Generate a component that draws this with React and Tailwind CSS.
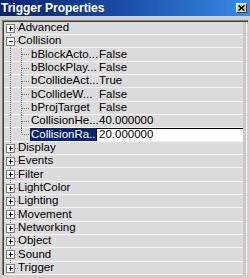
import React from "react";

const CHILDREN = [
  ["bBlockActo...", "False"],
  ["bBlockPlay...", "False"],
  ["bCollideAct...", "True"],
  ["bCollideW...", "False"],
  ["bProjTarget", "False"],
  ["CollisionHe...", "40.000000"],
];

const GROUPS_AFTER = [
  "Display",
  "Events",
  "Filter",
  "LightColor",
  "Lighting",
  "Movement",
  "Networking",
  "Object",
  "Sound",
  "Trigger",
];

const DOT = { stroke: "#808080", strokeWidth: 1, strokeDasharray: "1 1", shapeRendering: "crispEdges" };
const ROW = "h-[13.33px] flex items-stretch border-b border-[#f4f4f4] bg-[#dcdcdc]";

const GroupTree = ({ open, first, last }) => (
  <svg width="14" height="13.33" viewBox="0 0 14 13.33" className="shrink-0">
    {!first && <line x1="6.5" y1="0" x2="6.5" y2="2.5" style={DOT} />}
    {(!last || open) && <line x1="6.5" y1="10.5" x2="6.5" y2="13.33" style={DOT} />}
    <rect x="2.5" y="2.5" width="8" height="8" fill="#fff" stroke="#808080" shapeRendering="crispEdges" />
    <line x1="4.5" y1="6.5" x2="9" y2="6.5" stroke="#000" shapeRendering="crispEdges" />
    {!open && <line x1="6.5" y1="4.5" x2="6.5" y2="9" stroke="#000" shapeRendering="crispEdges" />}
    <line x1="11" y1="6.5" x2="14" y2="6.5" style={DOT} />
  </svg>
);

const ChildTree = ({ last }) => (
  <svg width="26" height="13.33" viewBox="0 0 26 13.33" className="shrink-0">
    <line x1="6.5" y1="0" x2="6.5" y2="13.33" style={DOT} />
    <line x1="17.5" y1="0" x2="17.5" y2={last ? 6.5 : 13.33} style={DOT} />
    <line x1="18" y1="6.5" x2="26" y2="6.5" style={DOT} />
  </svg>
);

const GroupRow = ({ label, open, first, last }) => (
  <div className={ROW}>
    <GroupTree open={open} first={first} last={last} />
    <span className="flex items-center text-black">{label}</span>
  </div>
);

const ChildRow = ({ name, value }) => (
  <div className={ROW}>
    <div className="w-[92px] flex items-stretch shrink-0">
      <ChildTree />
      <span className="flex items-center pl-[1px] text-black whitespace-nowrap">{name}</span>
    </div>
    <span className="flex items-center pl-[3px] text-black">{value}</span>
  </div>
);

const EditRow = () => (
  <div className="h-[13.33px] flex items-stretch bg-[#dcdcdc] border-b border-[#f4f4f4]">
    <div className="w-[92px] flex items-stretch shrink-0">
      <ChildTree last />
      <span className="flex-1 flex items-center pl-[1px] bg-[#0a246a] text-white whitespace-nowrap">
        CollisionRa...
      </span>
    </div>
    <span className="flex-1 flex items-center pl-[2px] bg-white border-t border-l border-black text-black">
      20.000000
    </span>
  </div>
);

export default function App() {
  return (
    <div className="w-[250px] h-[278px] overflow-hidden bg-[#d4d0c8] font-['Liberation_Sans',Arial,sans-serif] text-[11.5px] leading-none">
      {/* Title bar */}
      <div className="h-[16px] flex items-center justify-between pl-[1px] pr-[3px] bg-linear-to-r from-[#0a246a] via-[#1a4ea8] to-[#3a8be6]">
        <span className="text-white font-bold text-[12px]">Trigger Properties</span>
        <div className="w-[11px] h-[10px] flex items-center justify-center bg-[#d4d0c8] border-t border-l border-white border-r border-b border-r-[#404040] border-b-[#404040]">
          <svg width="7" height="6" viewBox="0 0 7 6">
            <path d="M0.5 0.5 L6.5 5.5 M6.5 0.5 L0.5 5.5" stroke="#000" strokeWidth="1.6" />
          </svg>
        </div>
      </div>

      {/* Property list */}
      <div className="mt-[3.67px] ml-[2px] mr-[2px] flex border-t border-l border-[#808080]">
        <div className="flex-1 flex border-t border-l border-[#404040]">
          <div className="w-[239px] flex flex-col">
            <GroupRow label="Advanced" first />
            <GroupRow label="Collision" open />
            {CHILDREN.map(([n, v]) => (
              <ChildRow key={n} name={n} value={v} />
            ))}
            <EditRow />
            {GROUPS_AFTER.map((g, i) => (
              <GroupRow key={g} label={g} last={i === GROUPS_AFTER.length - 1} />
            ))}
          </div>
          <div className="w-[4px] bg-[#c8c8c8] border-r border-white" />
        </div>
      </div>
    </div>
  );
}
